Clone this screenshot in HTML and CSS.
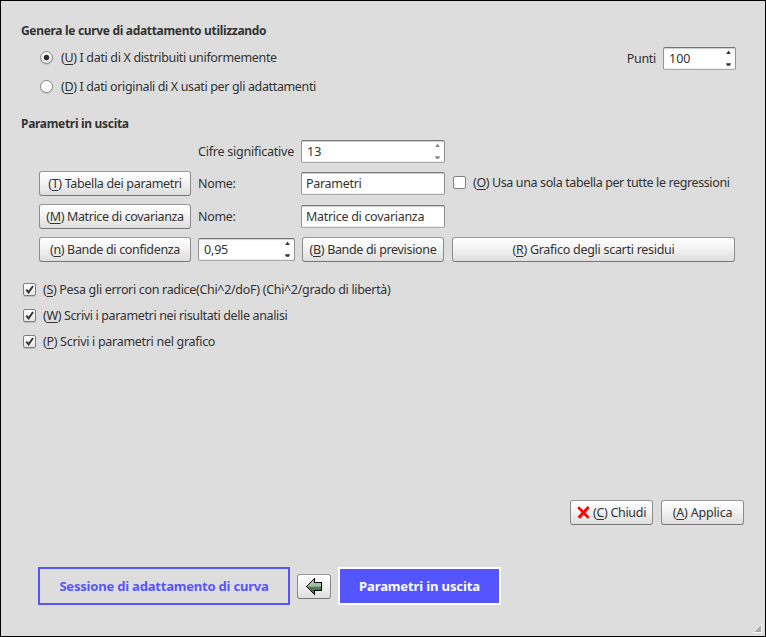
FILE: index.html
```
<!DOCTYPE html>
<html lang="it">
<head>
<meta charset="utf-8">
<title>Parametri in uscita</title>
<link rel="stylesheet" href="styles.css">
</head>
<body>
<svg class="defs" aria-hidden="true">
  <symbol id="tick" viewBox="0 0 13 13"><path d="M3.3 6.6 L5.6 9.4 L10 3" fill="none" stroke="#333" stroke-width="1.9"/></symbol>
  <symbol id="steps" viewBox="0 0 5 17"><path d="M0.2 3.9 L2.5 0.5 L4.8 3.9Z M0 13.2 H5 L4 15.8 H1Z" fill="currentColor"/></symbol>
</svg>
<main class="dialog">
  <h2 class="heading genera">Genera le curve di adattamento utilizzando</h2>
  <section class="source">
    <div class="radios">
      <label class="option"><i class="radio on"></i><span class="t-u">(<u>U</u>) I dati di X distribuiti uniformemente</span></label>
      <label class="option"><i class="radio"></i><span class="t-d">(<u>D</u>) I dati originali di X usati per gli adattamenti</span></label>
    </div>
    <div class="points">
      <span class="t-punti">Punti</span>
      <div class="field spin"><span class="t-num">100</span><svg class="steps"><use href="#steps"/></svg></div>
    </div>
  </section>
  <h2 class="heading">Parametri in uscita</h2>
  <section class="output">
    <div class="digits">
      <span class="t-cifre">Cifre significative</span>
      <div class="field spin dim"><span class="t-num">13</span><svg class="steps"><use href="#steps"/></svg></div>
    </div>
    <div class="line">
      <button class="btn"><span class="t-t">(<u>T</u>) Tabella dei parametri</span></button>
      <span>Nome:</span>
      <div class="field"><span>Parametri</span></div>
      <label class="option single"><i class="check"></i><span class="t-o">(<u>O</u>) Usa una sola tabella per tutte le regressioni</span></label>
    </div>
    <div class="line">
      <button class="btn"><span class="t-d">(<u>M</u>) Matrice di covarianza</span></button>
      <span>Nome:</span>
      <div class="field"><span>Matrice di covarianza</span></div>
    </div>
    <div class="line">
      <button class="btn"><span class="t-t">(<u>n</u>) Bande di confidenza</span></button>
      <div class="field spin conf"><span class="t-app">0,95</span><svg class="steps"><use href="#steps"/></svg></div>
      <button class="btn prev"><span class="t-t">(<u>B</u>) Bande di previsione</span></button>
      <button class="btn"><span class="t-r">(<u>R</u>) Grafico degli scarti residui</span></button>
    </div>
  </section>
  <section class="checks">
    <label class="option"><i class="check on"><svg><use href="#tick"/></svg></i><span class="t-s">(<u>S</u>) Pesa gli errori con radice(Chi^2/doF) (Chi^2/grado di libertà)</span></label>
    <label class="option"><i class="check on"><svg><use href="#tick"/></svg></i><span class="t-d">(<u>W</u>) Scrivi i parametri nei risultati delle analisi</span></label>
    <label class="option"><i class="check on"><svg><use href="#tick"/></svg></i><span>(<u>P</u>) Scrivi i parametri nel grafico</span></label>
  </section>
  <section class="actions">
    <button class="btn close"><svg class="cross" viewBox="0 0 13 13"><g fill="none" stroke-width="2.5"><path d="M2.4 2.5 L12 12.3 M11.4 2.4 L2.7 12.4" stroke="#888"/><path d="M1.2 1.2 L11.2 11.4 M11.6 0.8 L1.4 11.6" stroke="#f00"/></g></svg><span>(<u>C</u>) Chiudi</span></button>
    <button class="btn apply"><span class="t-app">(<u>A</u>) Applica</span></button>
  </section>
  <nav class="steps-nav">
    <a class="tab session">Sessione di adattamento di curva</a>
    <button class="btn back"><svg class="arrow" viewBox="0 0 17 17" shape-rendering="crispEdges">
      <defs><linearGradient id="g" x1="0" y1="0" x2="0" y2="1"><stop offset="0" stop-color="#b4ceb4"/><stop offset=".48" stop-color="#9dbd9d"/><stop offset=".55" stop-color="#527c55"/><stop offset="1" stop-color="#3d6540"/></linearGradient></defs>
      <path d="M0.5 8.5 L8.5 0.5 V4.5 H15.5 V12.5 H8.5 V16.5 Z" fill="url(#g)" stroke="#000"/></svg></button>
    <a class="tab current">Parametri in uscita</a>
  </nav>
  <svg class="grip" viewBox="0 0 10 10"><path d="M0 10 L10 0 V10Z" fill="#fafafa"/><path d="M2 9 L9 2 V9Z" fill="#aaa"/></svg>
</main>
</body>
</html>
```
FILE: styles.css
```
* { box-sizing: border-box; }
body {
  margin: 0;
  font: 12.5px/15px "Noto Sans", "Open Sans", sans-serif;
  letter-spacing: -.3px;
  color: #333;
}
.defs { display: block; width: 0; height: 0; }
.dialog {
  position: relative;
  width: 766px;
  height: 637px;
  padding: 22px 21px 0 20px;
  border: 1px solid #000;
  background: #ddd;
  white-space: nowrap;
}
u { text-underline-offset: 2px; text-decoration-thickness: 1px; text-decoration-skip-ink: none; }
.heading { margin: 0; font-size: 12px; line-height: 15px; font-weight: 700; letter-spacing: -.31px; }
.genera { letter-spacing: -.32px; }

.option { display: flex; align-items: center; gap: 8px; height: 15px; }
.source { display: flex; justify-content: space-between; align-items: flex-start; padding: 9px 8px 0 19px; height: 78px; }
.radios { display: flex; flex-direction: column; gap: 14px; padding-top: 3px; }
.radio {
  width: 13px; height: 13px; flex: none;
  border: 1px solid #858585; border-radius: 50%;
  background: linear-gradient(#fff, #fafafa);
  box-shadow: 0 1px 1px rgba(0,0,0,.13);
}
.radio.on { background: radial-gradient(circle, #333 0 2.4px, transparent 3.2px), linear-gradient(#fff, #e4e4e4); }
.points { display: flex; align-items: center; gap: 7px; }
.points .field { width: 73px; }

.field {
  display: flex; align-items: center; justify-content: space-between;
  height: 23px; padding: 0 4px;
  border: 1px solid #999; border-color: #777 #929292 #aaa; border-radius: 2px;
  background: #fff;
  box-shadow: inset 0 1px 1px #ccc, inset 0 -1px 0 #eee;
}
.spin { padding-left: 5px; }
.steps { width: 5px; height: 17px; color: #333; }
.dim .steps { color: #888; }

.btn {
  display: flex; align-items: center; justify-content: center;
  height: 25px; padding: 0; margin: 0;
  font: inherit; letter-spacing: inherit; color: inherit;
  border: 1px solid #919191; border-color: #999 #8c8c8c #777; border-radius: 3px;
  background: linear-gradient(#fff, #f3f3f3 45%, #dedede);
}

.output { display: flex; flex-direction: column; gap: 8px; padding: 9px 8px 0 18px; }
.digits { display: flex; align-items: center; padding-left: 159px; gap: 7px; }
.digits > span { width: 96px; }
.digits .field { width: 144px; }
.line { display: grid; grid-template-columns: 152px 96px 144px 283px; column-gap: 7px; align-items: center; height: 25px; }
.conf { margin-right: -1px; }
.prev { margin: 0 1px; }
.single { padding: 0 0 2px 1px; }

.checks { display: flex; flex-direction: column; gap: 11px; padding: 20px 0 0 2px; }
.checks .option, .single { gap: 7px; }
.check {
  width: 13px; height: 13px; flex: none;
  border: 1px solid #808080; border-radius: 2px; background: #fff;
}
.check.on { background: linear-gradient(#fff, #e4e4e4); box-shadow: 0 1px 1px rgba(0,0,0,.15); }
.check svg { display: block; width: 13px; height: 13px; margin: -1px; }

.actions { display: flex; justify-content: flex-end; gap: 8px; margin-top: 151px; }
.close, .apply { width: 83px; }
.close { gap: 3px; }
.cross { width: 13px; height: 13px; }

.steps-nav { display: flex; align-items: center; gap: 7px; margin-top: 42px; padding-left: 17px; }
.tab {
  display: flex; align-items: center; justify-content: center;
  height: 38px; border: 2px solid #55f;
  font-size: 13px; font-weight: 700; color: #55f;
}
.session { width: 252px; letter-spacing: -.2px; }
.current { width: 163px; letter-spacing: -.12px; background: #55f; border-color: #fff; color: #fff; }
.back { width: 34px; }
.arrow { width: 17px; height: 17px; }
.grip { position: absolute; right: 3px; bottom: 3px; width: 10px; height: 10px; }

.t-u { letter-spacing: -.34px; }
.t-d { letter-spacing: -.36px; }
.t-o { letter-spacing: -.38px; }
.t-punti { letter-spacing: -.3px; }
.t-num { letter-spacing: 0; }
.t-cifre { letter-spacing: -.22px; }
.t-t { letter-spacing: -.33px; }
.t-r { letter-spacing: -.28px; }
.t-s { letter-spacing: -.32px; }
.t-app { letter-spacing: -.18px; }
```
